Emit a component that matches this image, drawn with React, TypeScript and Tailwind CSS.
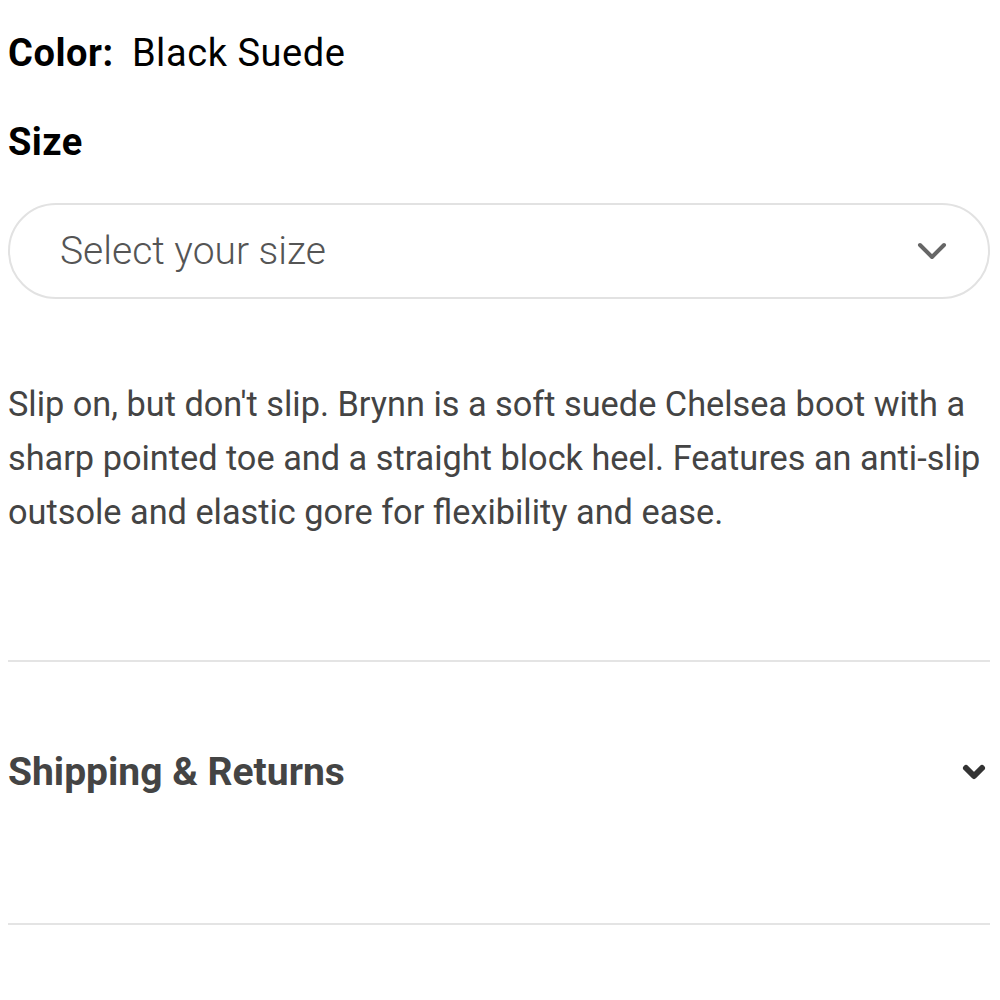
import { ChevronDown } from "lucide-react";

export default function App() {
  return (
    <div className="w-[1000px] bg-white pl-2 pr-[10px] font-['Roboto',sans-serif]">
      <div className="pt-[31px] text-[38px] leading-[44px] tracking-[0.015em] text-black">
        <span className="font-bold">Color:</span>
        <span className="ml-[18px]">Black Suede</span>
      </div>
      <div className="mt-[47px] text-[38px] font-bold leading-[40px] tracking-[0.01em] text-black">Size</div>
      <button className="mt-[41px] flex h-[96px] w-full items-center justify-between rounded-full border-2 border-[#e2e2e2] bg-white pl-[50px] pr-[32px]">
        <span className="text-[39px] font-light text-[#555]">Select your size</span>
        <ChevronDown className="h-[48px] w-[48px] text-[#666]" strokeWidth={2} />
      </button>
      <p className="mt-[78px] text-[34.3px] leading-[54px] text-[#444]">
        Slip on, but don't slip. Brynn is a soft suede Chelsea boot with a sharp pointed toe and a straight block heel.
        Features an anti-slip outsole and elastic gore for flexibility and ease.
      </p>
      <div className="mt-[121px] h-[2px] bg-[#e4e4e4]" />
      <div className="mt-[90px] flex items-center justify-between">
        <span className="text-[39px] font-bold leading-[40px] text-[#444]">Shipping &amp; Returns</span>
        <ChevronDown className="h-[32px] w-[32px] text-[#333]" strokeWidth={4.5} />
      </div>
      <div className="mt-[131px] h-[2px] bg-[#e4e4e4]" />
      <div className="h-[75px]" />
    </div>
  );
}
